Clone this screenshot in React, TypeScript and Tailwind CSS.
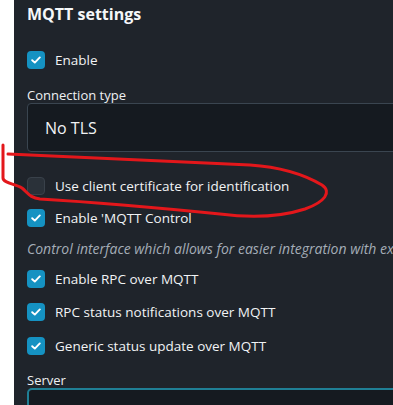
import React from "react";

function Check({ checked }: { checked: boolean }) {
  if (!checked) {
    return (
      <span className="block h-[18px] w-[18px] shrink-0 rounded-[4px] border border-[#39414a] bg-[#2a3139]" />
    );
  }
  return (
    <span className="flex h-[18px] w-[18px] shrink-0 items-center justify-center rounded-[4px] bg-[#1592c2]">
      <svg width="10" height="8" viewBox="0 0 10 8" fill="none">
        <path d="M1.2 4.2 L3.8 6.6 L8.8 1.4" stroke="#fff" strokeWidth="1.9" strokeLinecap="round" strokeLinejoin="round" />
      </svg>
    </span>
  );
}

function Row({ checked, label, className }: { checked: boolean; label: string; className?: string }) {
  return (
    <div className={"flex h-[18px] items-center gap-[10px] " + (className ?? "")}>
      <Check checked={checked} />
      <span className="whitespace-nowrap text-[13.5px] leading-[18px] text-[#f1f3f5]">{label}</span>
    </div>
  );
}

export default function App() {
  return (
    <div className="relative flex h-[405px] w-[393px] overflow-hidden bg-white font-['Open_Sans',sans-serif]">
      <div className="w-[14px] shrink-0 bg-white" />
      <div className="min-w-0 flex-1 overflow-hidden bg-[#1f242b] pl-[13px]">
        <h2 className="mt-[2px] text-[16px] font-bold leading-[24px] text-[#f5f7f9]">MQTT settings</h2>
        <Row checked label="Enable" className="mt-[25px]" />
        <div className="mt-[18px] text-[13px] leading-[16px] text-[#eef0f2]">Connection type</div>
        <div className="flex h-[49px] w-[400px] items-center rounded-[4px] border border-[#3a4550] bg-[#151a20] pl-[17px] text-[16px] text-[#f1f3f5]">
          No TLS
        </div>
        <Row checked={false} label="Use client certificate for identification" className="mt-[25px]" />
        <Row checked label="Enable 'MQTT Control" className="mt-[14px]" />
        <div className="mt-[13px] whitespace-nowrap text-[14px] italic leading-[18px] text-[#a4adb7]">
          Control interface which allows for easier integration with ex
        </div>
        <Row checked label="Enable RPC over MQTT" className="mt-[12px]" />
        <Row checked label="RPC status notifications over MQTT" className="mt-[15px]" />
        <Row checked label="Generic status update over MQTT" className="mt-[16px]" />
        <div className="mt-[17px] text-[13px] leading-[16px] text-[#eef0f2]">Server</div>
        <div className="h-[40px] w-[400px] rounded-[5px] border-2 border-[#1f7f95] bg-[#151a20]" />
      </div>
      <svg className="pointer-events-none absolute left-0 top-0" width="393" height="405" viewBox="0 0 393 405" fill="none">
        <path
          d="M3 145 L3 178 C 3 183, 15 184, 22 188 C 28 193, 30 198, 40 199 C 90 202, 160 208, 220 214 C 250 218, 280 217, 305 209 C 325 202, 332 192, 322 185 C 305 175, 280 167, 250 165 C 190 163, 100 158, 8 154"
          stroke="#e3171b"
          strokeWidth="3"
          strokeLinecap="round"
          strokeLinejoin="round"
        />
      </svg>
    </div>
  );
}
